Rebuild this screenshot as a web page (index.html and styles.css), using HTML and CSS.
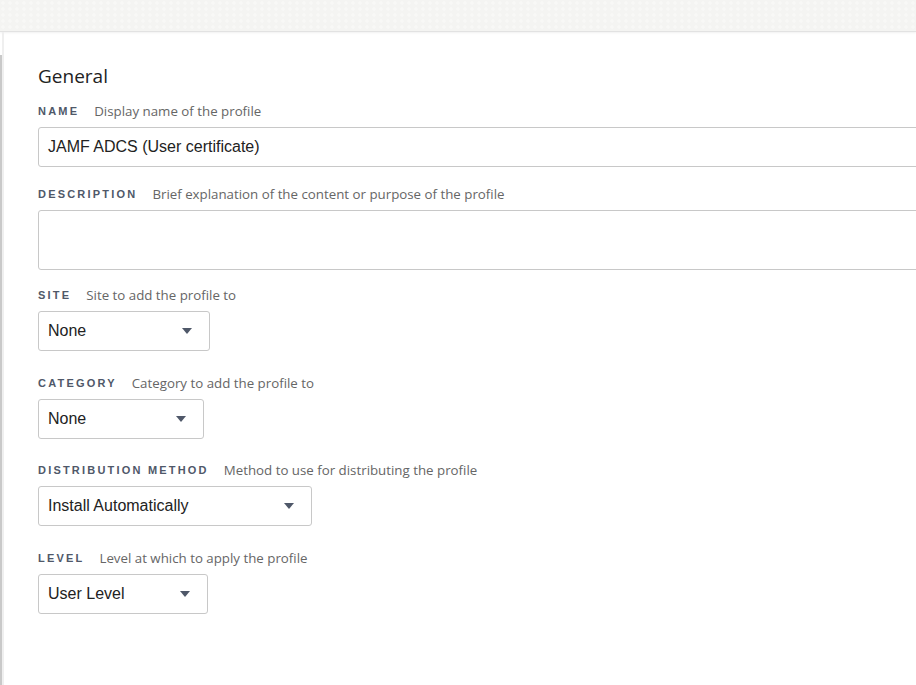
FILE: index.html
```html
<!DOCTYPE html>
<html>
<head>
<meta charset="utf-8">
<link rel="stylesheet" href="styles.css">
</head>
<body>
<div class="topbar"></div>
<div class="page">
  <div class="rail"></div>
  <main class="content">
    <h2 class="title">General</h2>

    <div class="field">
      <div class="label"><span class="key">NAME</span><span class="hint">Display name of the profile</span></div>
      <div class="input wide">JAMF ADCS (User certificate)</div>
    </div>

    <div class="field">
      <div class="label"><span class="key">DESCRIPTION</span><span class="hint">Brief explanation of the content or purpose of the profile</span></div>
      <div class="input wide area"></div>
    </div>

    <div class="field sel">
      <div class="label"><span class="key">SITE</span><span class="hint">Site to add the profile to</span></div>
      <div class="input select w-site"><span>None</span><span class="caret"></span></div>
    </div>

    <div class="field sel">
      <div class="label"><span class="key">CATEGORY</span><span class="hint">Category to add the profile to</span></div>
      <div class="input select w-cat"><span>None</span><span class="caret"></span></div>
    </div>

    <div class="field sel">
      <div class="label"><span class="key">DISTRIBUTION METHOD</span><span class="hint">Method to use for distributing the profile</span></div>
      <div class="input select w-dist"><span>Install Automatically</span><span class="caret"></span></div>
    </div>

    <div class="field sel">
      <div class="label"><span class="key">LEVEL</span><span class="hint">Level at which to apply the profile</span></div>
      <div class="input select w-level"><span>User Level</span><span class="caret"></span></div>
    </div>
  </main>
</div>
</body>
</html>
```

FILE: styles.css
```css
* { box-sizing: border-box; }
html, body { margin: 0; padding: 0; }
body {
  width: 916px;
  height: 685px;
  overflow: hidden;
  background: #ffffff;
  font-family: "Liberation Sans", Arial, sans-serif;
  color: #222;
}
.topbar {
  height: 32px;
  background-color: #f4f4f2;
  background-image: radial-gradient(circle at 3px 3px, #f8f8f6 1.5px, transparent 2px);
  background-size: 7px 6px;
  border-bottom: 1px solid #e2e2e2;
  box-shadow: 0 1px 2px rgba(0,0,0,0.06);
}
.page {
  display: flex;
  height: 653px;
}
.rail {
  width: 4px;
  flex: none;
  background: #efefef;
  border-left: 2px solid transparent;
  background-clip: padding-box;
  position: relative;
}
.rail::before {
  content: "";
  position: absolute;
  left: -2px;
  top: 23px;
  bottom: 0;
  width: 2px;
  background: #c9c9c9;
}
.content {
  flex: 1;
  padding: 32px 0 0 34px;
  min-width: 0;
}
.title {
  margin: 0 0 15px 0;
  font-family: "Open Sans", "Liberation Sans", sans-serif;
  font-weight: normal;
  font-size: 19px;
  line-height: 24px;
  color: #222;
}
.field { margin-bottom: 19px; }
.field.sel { margin-bottom: 23.5px; }
.field:nth-child(3) { margin-bottom: 17px; }
.label {
  display: flex;
  align-items: center;
  height: 16px;
  margin-bottom: 8px;
  white-space: nowrap;
}
.key {
  font-size: 11px;
  font-weight: bold;
  letter-spacing: 2.2px;
  color: #4f5869;
  margin-right: 15px;
}
.hint {
  font-family: "Open Sans", "Liberation Sans", sans-serif;
  font-size: 13.3px;
  color: #666;
}
.input {
  height: 40px;
  border: 1px solid #c8c8c8;
  border-radius: 3px;
  padding: 0 10px 0 9px;
  font-size: 16px;
  display: flex;
  align-items: center;
  color: #222;
}
.input.wide {
  margin-right: -10px;
}
.input.area { height: 60px; }
.select { justify-content: space-between; padding-right: 17px; }
.caret {
  width: 0; height: 0;
  border-left: 5px solid transparent;
  border-right: 5px solid transparent;
  border-top: 6px solid #4f5869;
}
.w-site { width: 172px; }
.w-cat { width: 166px; }
.w-dist { width: 274px; }
.w-level { width: 170px; }
```
